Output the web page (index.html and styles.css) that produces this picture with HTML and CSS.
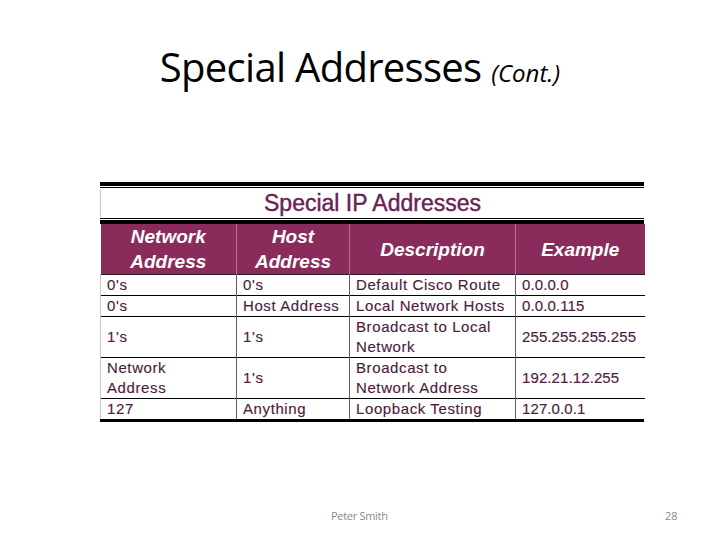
FILE: index.html
```html
<!DOCTYPE html>
<html>
<head>
<meta charset="utf-8">
<link rel="stylesheet" href="styles.css">
</head>
<body>
<div class="slide">
  <h1 class="title">Special Addresses <span class="cont">(Cont.)</span></h1>
  <div class="figure">
    <div class="rule-thick"></div>
    <div class="rule-thin"></div>
    <div class="caption">Special IP Addresses</div>
    <div class="rule-thin"></div>
    <div class="rule-thick"></div>
    <table class="addr">
      <colgroup>
        <col class="c1"><col class="c2"><col class="c3"><col class="c4">
      </colgroup>
      <thead>
        <tr>
          <th>Network<br>Address</th>
          <th>Host<br>Address</th>
          <th>Description</th>
          <th>Example</th>
        </tr>
      </thead>
      <tbody>
        <tr class="r1">
          <td>0's</td><td>0's</td><td>Default Cisco Route</td><td class="ex">0.0.0.0</td>
        </tr>
        <tr class="r1">
          <td>0's</td><td>Host Address</td><td>Local Network Hosts</td><td class="ex">0.0.0.115</td>
        </tr>
        <tr class="r2">
          <td>1's</td><td>1's</td><td>Broadcast to Local<br>Network</td><td class="ex">255.255.255.255</td>
        </tr>
        <tr class="r2">
          <td>Network<br>Address</td><td>1's</td><td>Broadcast to<br>Network Address</td><td class="ex">192.21.12.255</td>
        </tr>
        <tr class="r1 last">
          <td>127</td><td>Anything</td><td>Loopback Testing</td><td class="ex">127.0.0.1</td>
        </tr>
      </tbody>
    </table>
    <div class="rule-bottom"></div>
  </div>
  <div class="footer">
    <span class="author">Peter Smith</span>
    <span class="page">28</span>
  </div>
</div>
</body>
</html>
```
FILE: styles.css
```css
html, body {
  margin: 0;
  padding: 0;
  background: #ffffff;
}
.slide {
  position: relative;
  width: 720px;
  height: 540px;
  overflow: hidden;
}
.title {
  margin: 0;
  padding-top: 40px;
  height: 54px;
  text-align: center;
  font-family: "Open Sans", "Noto Sans", sans-serif;
  font-weight: 400;
  font-size: 40px;
  line-height: 54px;
  color: #000000;
  letter-spacing: -0.7px;
}
.cont {
  font-style: italic;
  font-size: 24px;
  letter-spacing: 0;
}
.figure {
  margin-top: 88px;
  margin-left: 100px;
  width: 544px;
}
.rule-thick {
  height: 4px;
  background: #000000;
}
.rule-thin {
  height: 1px;
  background: #000000;
  margin: 1px 0;
}
.caption {
  height: 28px;
  border-left: 1px solid #c8c8c8;
  font-family: "Liberation Sans", Arial, sans-serif;
  font-size: 23px;
  line-height: 28px;
  color: #6a2253;
  text-align: center;
  -webkit-text-stroke: 0.4px #6a2253;
}
.addr {
  width: 544px;
  border-collapse: collapse;
  table-layout: fixed;
  font-family: "Liberation Sans", Arial, sans-serif;
}
.c1 { width: 136px; }
.c2 { width: 113px; }
.c3 { width: 166px; }
.c4 { width: 129px; }
.addr th {
  background: #8a2c5b;
  color: #ffffff;
  font-size: 19px;
  font-weight: bold;
  font-style: italic;
  line-height: 25px;
  height: 50px;
  padding: 0;
  text-align: center;
  border-left: 1px solid #b0708f;
}
.addr th:first-child {
  border-left: none;
}
.addr td {
  font-size: 15px;
  line-height: 20px;
  letter-spacing: 0.6px;
  color: #4e1b40;
  -webkit-text-stroke: 0.15px #4e1b40;
  padding: 0 0 0 6px;
  border-top: 1px solid #000000;
  border-left: 1px solid #6b5a66;
  vertical-align: middle;
  white-space: nowrap;
}
.addr td.ex {
  letter-spacing: 0.1px;
}
.addr td:first-child {
  border-left: 1px solid #c8c8c8;
}
.addr tbody tr:first-child td {
  border-top: 1px solid #2a1a24;
}
.r1 td { height: 20px; }
.r2 td { height: 40px; }
.rule-bottom {
  height: 3px;
  background: #000000;
}
.footer {
  position: absolute;
  left: 0;
  top: 506px;
  width: 720px;
  height: 20px;
  font-family: "Open Sans", "Noto Sans", sans-serif;
  font-size: 11px;
  color: #8a8a8a;
}
.author {
  position: absolute;
  left: 331px;
  top: 2px;
  letter-spacing: -0.3px;
}
.page {
  position: absolute;
  left: 665px;
  top: 2px;
}
```
